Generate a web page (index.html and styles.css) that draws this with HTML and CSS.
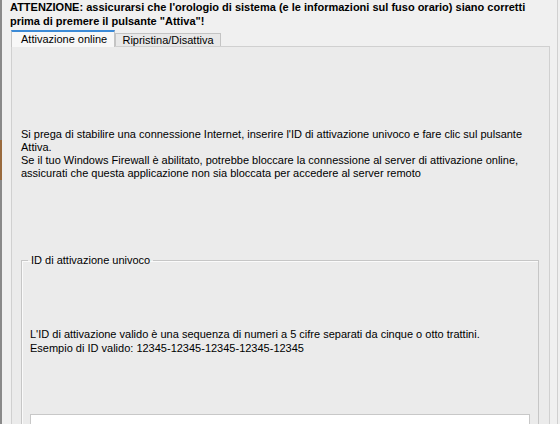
FILE: index.html
```html
<!DOCTYPE html>
<html lang="it">
<head>
  <meta charset="UTF-8">
  <title>Attivazione</title>
  <link rel="stylesheet" href="styles.css">
</head>
<body>

  <div class="frame">
    <!-- window behind, peeking on the left -->
    <div class="edge"></div>

    <div class="dialog">
      <p class="warning">ATTENZIONE: assicurarsi che l'orologio di sistema (e le informazioni sul fuso orario) siano corretti<br>prima di premere il pulsante "Attiva"!</p>

      <div class="tabs">
        <div class="tab active">Attivazione online</div>
        <div class="tab">Ripristina/Disattiva</div>
      </div>

      <div class="panel">
        <p class="intro">Si prega di stabilire una connessione Internet, inserire l'ID di attivazione univoco e fare clic sul pulsante<br>Attiva.<br>Se il tuo Windows Firewall è abilitato, potrebbe bloccare la connessione al server di attivazione online,<br>assicurati che questa applicazione non sia bloccata per accedere al server remoto</p>

        <fieldset class="group">
          <legend>ID di attivazione univoco</legend>
          <p class="hint">L'ID di attivazione valido è una sequenza di numeri a 5 cifre separati da cinque o otto trattini.<br>Esempio di ID valido: 12345-12345-12345-12345-12345</p>
          <input class="id-input" type="text">
        </fieldset>
      </div>
    </div>

    <div class="side"></div>
  </div>

</body>
</html>
```

FILE: styles.css
```css
* {
  box-sizing: border-box;
}

body {
  margin: 0;
  width: 560px;
  height: 424px;
  overflow: hidden;
  background: #f0f0f0;
  font-family: 'Liberation Sans', Arial, sans-serif;
  font-size: 11px;
  color: #000;
}

.frame {
  display: flex;
  height: 424px;
}

.edge {
  width: 2px;
  flex: none;
  background: linear-gradient(#8a8a8a 0, #8a8a8a 140px, #9a6b3f 140px, #9a6b3f 180px, #8a8a8a 180px);
}

.dialog {
  flex: none;
  width: 555px;
  padding-left: 8px;
}

.side {
  flex: none;
  width: 3px;
  border-left: 1px solid #d0d0d0;
  background: #f0f0f0;
}

.warning {
  margin: 0;
  font-weight: bold;
  line-height: 14px;
}

.tabs {
  display: flex;
  align-items: flex-end;
  margin: 2px 0 0 1px;
  height: 16px;
}

.tab {
  width: 106px;
  height: 13px;
  line-height: 12px;
  text-align: center;
  white-space: nowrap;
  background: #e8e8e8;
  border: 1px solid #c4c4c4;
  border-bottom: none;
  color: #000;
}

.tab.active {
  width: 104px;
  height: 17px;
  padding-left: 9px;
  line-height: 15px;
  text-align: left;
  background: #f7f7f7;
  border-color: #c4c4c4;
  border-top: 2px solid #3c8ad6;
  margin-bottom: -1px;
  position: relative;
  z-index: 1;
}

.panel {
  margin-left: 1px;
  width: 539px;
  height: 378px;
  overflow: hidden;
  border: 1px solid #d0d0d0;
  border-bottom: none;
  background: #ebebeb;
  padding: 81px 9px 0 9px;
}

.intro {
  margin: 0;
  line-height: 13px;
}

.group {
  margin: 74px 0 0 0;
  width: 518px;
  height: 200px;
  padding: 0 8px 0 8px;
  border: 1px solid #c6c6c6;
  box-shadow: inset 1px 1px 0 #fafafa;
}

.group legend {
  padding: 0 3px;
  margin-left: -2px;
  line-height: 13px;
}

.hint {
  margin: 60px 0 0 0;
  line-height: 14px;
}

.id-input {
  display: block;
  margin-top: 59px;
  width: 500px;
  height: 22px;
  border: 1px solid #c8c8c8;
  background: #fff;
}
```
